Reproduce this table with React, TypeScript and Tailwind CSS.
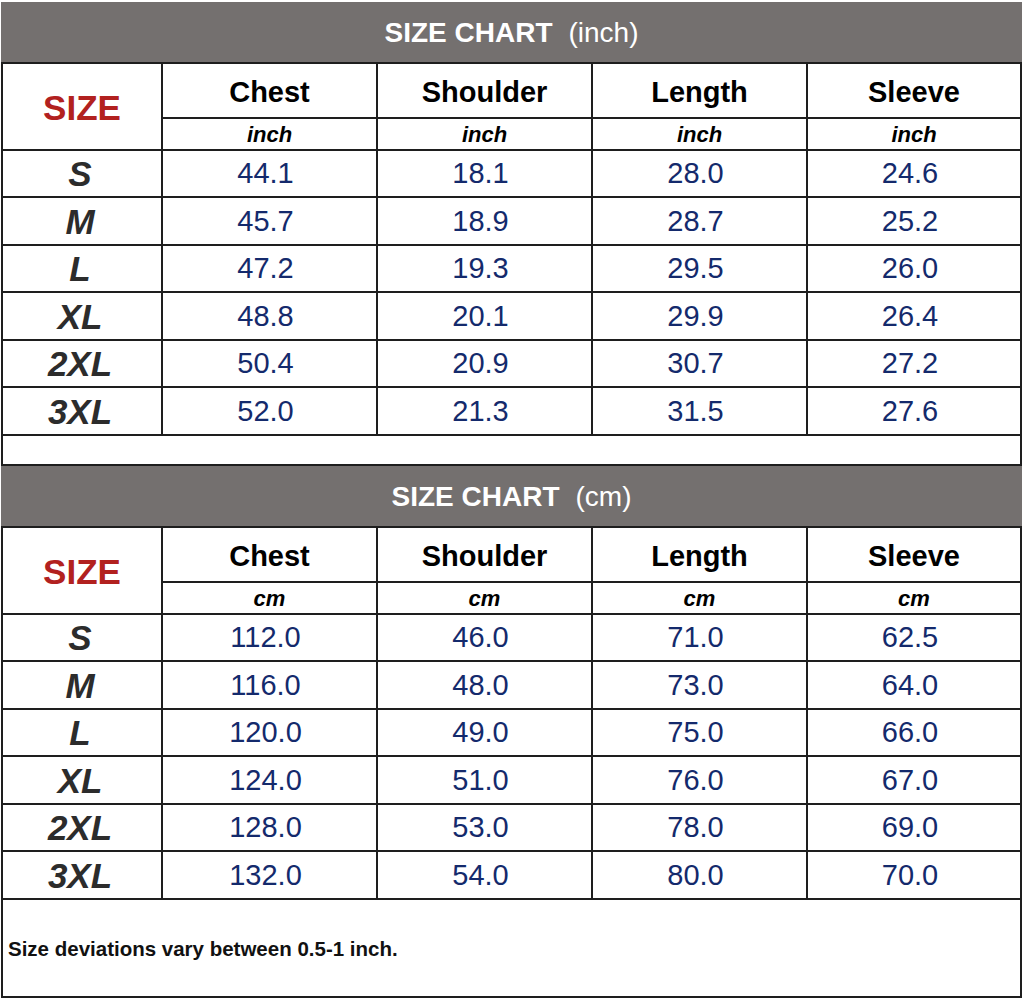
const inchRows = [
  ['S', '44.1', '18.1', '28.0', '24.6'],
  ['M', '45.7', '18.9', '28.7', '25.2'],
  ['L', '47.2', '19.3', '29.5', '26.0'],
  ['XL', '48.8', '20.1', '29.9', '26.4'],
  ['2XL', '50.4', '20.9', '30.7', '27.2'],
  ['3XL', '52.0', '21.3', '31.5', '27.6'],
];

const cmRows = [
  ['S', '112.0', '46.0', '71.0', '62.5'],
  ['M', '116.0', '48.0', '73.0', '64.0'],
  ['L', '120.0', '49.0', '75.0', '66.0'],
  ['XL', '124.0', '51.0', '76.0', '67.0'],
  ['2XL', '128.0', '53.0', '78.0', '69.0'],
  ['3XL', '132.0', '54.0', '80.0', '70.0'],
];

const columns = ['Chest', 'Shoulder', 'Length', 'Sleeve'];
const rowHeights = ['h-[47px]', 'h-[48px]', 'h-[47px]', 'h-[48px]', 'h-[47px]', 'h-[48px]'];

const gridCols = 'grid grid-cols-[160px_215px_215px_215px_212px]';
const cell = 'flex items-center justify-center border-b-2 border-[#1e1e1e]';

function TitleBar({ unit }: { unit: string }) {
  return (
    <div className="flex h-[62px] items-center justify-center border-b-2 border-[#1e1e1e] bg-[#74706f] pt-0.5 text-white">
      <span className="text-[28px] font-bold leading-none">SIZE CHART</span>
      <span className="ml-4 text-[28px] leading-none">({unit})</span>
    </div>
  );
}

function Section({ unit, rows }: { unit: string; rows: string[][] }) {
  return (
    <>
      <TitleBar unit={unit} />
      <div className={`${gridCols} grid-rows-[55px_32px] border-x-2 border-[#1e1e1e]`}>
        <div className={`${cell} row-span-2 border-r-2 pt-1 text-[35px] font-bold text-[#b2211f]`}>SIZE</div>
        {columns.map((c, i) => (
          <div
            key={c}
            className={`${cell} ${i < 3 ? 'border-r-2' : ''} pt-1 text-[29px] font-bold text-black`}
          >
            {c}
          </div>
        ))}
        {columns.map((c, i) => (
          <div
            key={c + '-u'}
            className={`${cell} ${i < 3 ? 'border-r-2' : ''} text-[22px] font-bold italic text-black`}
          >
            {unit}
          </div>
        ))}
      </div>
      {rows.map((r, ri) => (
        <div key={r[0]} className={`${gridCols} ${rowHeights[ri]} border-x-2 border-[#1e1e1e]`}>
          {r.map((v, i) => (
            <div
              key={i}
              className={`${cell} ${i < 4 ? 'border-r-2' : ''} ${
                i === 0
                  ? 'pr-1 text-[35px] font-bold italic text-[#2c2c2c]'
                  : 'pr-2 text-[29px] text-[#142a6c]'
              } leading-none`}
            >
              {v}
            </div>
          ))}
        </div>
      ))}
    </>
  );
}

export default function App() {
  return (
    <div className="min-h-[999px] bg-white font-['Liberation_Sans',Arial,sans-serif]">
      <div className="ml-px w-[1021px] pt-[2px]">
        <Section unit="inch" rows={inchRows} />
        <div className="h-[30px] border-x-2 border-b-2 border-[#1e1e1e]" />
        <Section unit="cm" rows={cmRows} />
        <div className="flex h-[98px] items-center border-x-2 border-b-2 border-[#1e1e1e] pl-[5px] pt-0.5">
          <span className="text-[20.5px] font-bold text-[#111]">Size deviations vary between 0.5-1 inch.</span>
        </div>
      </div>
    </div>
  );
}
